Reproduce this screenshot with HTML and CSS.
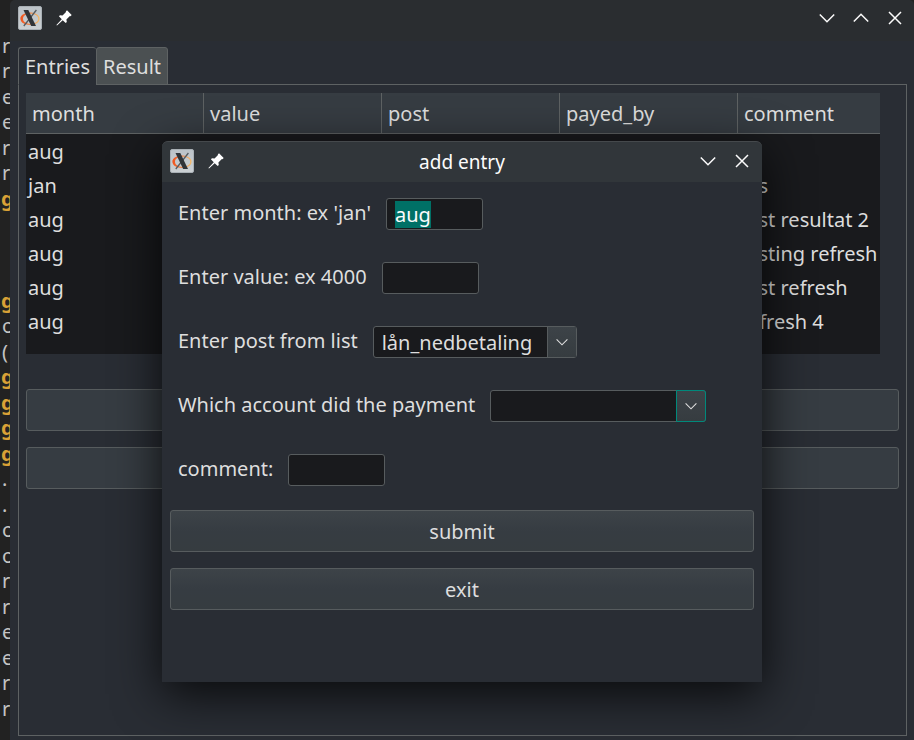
FILE: index.html
```
<!DOCTYPE html>
<html lang="en">
<head>
<meta charset="utf-8">
<title>Entries</title>
<link rel="stylesheet" href="styles.css">
</head>
<body>
<svg class="defs" aria-hidden="true">
  <defs>
    <linearGradient id="tile" x1="0" y1="0" x2="0" y2="1"><stop offset="0" stop-color="#bcc3c8"/><stop offset="1" stop-color="#cbd0d3"/></linearGradient>
    <linearGradient id="ring" x1="0" y1="0" x2="1" y2="0"><stop offset="0" stop-color="#f0521c"/><stop offset=".5" stop-color="#ee8347"/><stop offset="1" stop-color="#f3bd6c"/></linearGradient>
    <symbol id="xorg" viewBox="0 0 24 24">
      <rect x=".5" y=".5" width="23" height="23" rx="1.5" fill="url(#tile)" stroke="#a9b0b5"/>
      <path fill="url(#ring)" fill-rule="evenodd" d="M12 6.6C17 6.6 21.6 9 21.6 12.8S17 19 12 19 2.4 16.6 2.4 12.8 7 6.6 12 6.6zM12.6 7.8C8.6 7.8 5 9.6 5 12.8S8.6 17.8 12.6 17.8 20.2 16 20.2 12.8 16.6 7.8 12.6 7.8z"/>
      <path d="M18.4 4 5.8 20" stroke="#555b5f" stroke-width="1.3"/>
      <path d="M5.5 4h4.8l7.7 16h-4.8z" fill="#303438"/>
    </symbol>
    <symbol id="pin" viewBox="0 0 16 16">
      <path fill="#fff" d="M11 .3 15.7 5 14.5 6.2 13.9 6 10.4 9.5 10.8 12 9.7 13.1 6.7 10.2 1 15.6.4 15 5.8 9.3 2.9 6.3 4 5.2 6.5 5.6 10 2.1 9.8 1.5z"/>
    </symbol>
    <symbol id="down" viewBox="0 0 16 16"><path d="M.8 4.5 8 11.7 15.2 4.5" fill="none" stroke="currentColor" stroke-width="1.5"/></symbol>
    <symbol id="up" viewBox="0 0 16 16"><path d="M.8 11.5 8 4.3 15.2 11.5" fill="none" stroke="currentColor" stroke-width="1.5"/></symbol>
    <symbol id="close" viewBox="0 0 16 16"><path d="M2 2 14 14M14 2 2 14" fill="none" stroke="currentColor" stroke-width="1.5"/></symbol>
  </defs>
</svg>
<div class="desktop">
  <aside class="terminal">
    <span>r</span><span>r</span><span>e</span><span>e</span><span>r</span><span>r</span><b>g</b>
    <span></span><span></span><span></span><b>g</b><span>o</span><span>(</span><b>g</b><b>g</b><b>g</b><b>g</b>
    <span>.</span><span>.</span><span>o</span><span>o</span><span>r</span><span>r</span><span>e</span><span>e</span><span>r</span><span>r</span>
  </aside>

  <main class="window">
    <header class="titlebar">
      <svg class="app-icon"><use href="#xorg"/></svg>
      <button class="win-btn" aria-label="Pin"><svg><use href="#pin"/></svg></button>
      <span class="spacer"></span>
      <button class="win-btn" aria-label="Minimize"><svg><use href="#down"/></svg></button>
      <button class="win-btn" aria-label="Maximize"><svg><use href="#up"/></svg></button>
      <button class="win-btn" aria-label="Close"><svg><use href="#close"/></svg></button>
    </header>
    <div class="tabs" role="tablist">
      <button class="tab selected" role="tab" aria-selected="true">Entries</button>
      <button class="tab" role="tab" aria-selected="false">Result</button>
    </div>
    <section class="panel">
      <div class="table-box">
        <table>
          <thead><tr><th>month</th><th>value</th><th>post</th><th>payed_by</th><th>comment</th></tr></thead>
          <tbody>
            <tr><td>aug</td><td></td><td></td><td></td><td></td></tr>
            <tr><td>jan</td><td></td><td></td><td></td><td>tes</td></tr>
            <tr><td>aug</td><td></td><td></td><td></td><td>test resultat 2</td></tr>
            <tr><td>aug</td><td></td><td></td><td></td><td>testing refresh</td></tr>
            <tr><td>aug</td><td></td><td></td><td></td><td>test refresh</td></tr>
            <tr><td>aug</td><td></td><td></td><td></td><td>refresh 4</td></tr>
          </tbody>
        </table>
      </div>
      <button class="push" aria-label="Add entry"></button>
      <button class="push" aria-label="Refresh"></button>
    </section>

    <section class="dialog" role="dialog" aria-labelledby="dialog-title">
      <header class="titlebar">
        <svg class="app-icon"><use href="#xorg"/></svg>
        <button class="win-btn" aria-label="Pin"><svg><use href="#pin"/></svg></button>
        <h1 id="dialog-title">add entry</h1>
        <button class="win-btn" aria-label="Minimize"><svg><use href="#down"/></svg></button>
        <button class="win-btn" aria-label="Close"><svg><use href="#close"/></svg></button>
      </header>
      <form class="form">
        <div class="field"><label for="month">Enter month: ex 'jan'</label><input id="month" class="entry" value="aug"></div>
        <div class="field"><label for="value">Enter value: ex 4000</label><input id="value" class="entry"></div>
        <div class="field"><label for="post">Enter post from list</label>
          <span class="combo"><select id="post"><option>lån_nedbetaling</option></select><span class="arrow"><svg><use href="#down"/></svg></span></span></div>
        <div class="field"><label for="account">Which account did the payment</label>
          <span class="combo wide active"><select id="account"><option></option></select><span class="arrow"><svg><use href="#down"/></svg></span></span></div>
        <div class="field"><label for="comment">comment:</label><input id="comment" class="entry"></div>
        <button type="button" class="push">submit</button>
        <button type="button" class="push">exit</button>
      </form>
    </section>
  </main>
</div>
<script src="script.js"></script>
</body>
</html>
```
FILE: script.js
```
const month = document.getElementById('month');
month.focus();
month.select();
```
FILE: styles.css
```
* { box-sizing: border-box; }

body {
  margin: 0;
  background: #222;
  color: #dedede;
  font: 20px/26px "Noto Sans", sans-serif;
}

button, input, select { font: inherit; color: inherit; }

.defs { position: absolute; width: 0; height: 0; }

.desktop {
  display: flex;
  height: 100vh;
  overflow: hidden;
}

.terminal {
  flex: 0 0 10px;
  display: grid;
  grid-template-rows: repeat(14, 25px 26px);
  justify-items: end;
  padding-top: 33px;
  overflow: hidden;
  background: #222;
  color: #c4c4c4;
}
.terminal > * { width: 8px; }
.terminal b { width: 9px; color: #d9a136; }

.window {
  position: relative;
  flex: 1;
  display: flex;
  flex-direction: column;
  min-width: 0;
  padding: 0 7px 4px 8px;
  border-radius: 5px 5px 0 0;
  background: linear-gradient(#2a2d30 41px, #292d34 41px);
}

.titlebar {
  display: flex;
  align-items: center;
  gap: 10px;
  height: 36px;
}
.app-icon { width: 24px; height: 24px; }
.win-btn {
  display: flex;
  align-items: center;
  justify-content: center;
  width: 24px;
  height: 24px;
  padding: 0;
  border: 0;
  background: none;
  color: #fcfcfc;
}
.win-btn svg { width: 16px; height: 16px; }
.spacer { flex: 1; }

.tabs {
  display: flex;
  margin-top: 11px;
}
.tab {
  height: 38px;
  padding: 2px 6px 0;
  border: 1px solid #5e6263;
  border-radius: 3px 3px 0 0;
  background: #4b5052;
}
.tab.selected {
  background: #292d34;
  border-bottom-color: #292d34;
  border-right: 0;
  z-index: 1;
}

.panel {
  flex: 1;
  display: flex;
  flex-direction: column;
  margin-top: -1px;
  padding: 8px 7px;
  border: 1px solid #5e6263;
}
.panel .push + .push { margin-top: 16px; }

.table-box {
  height: 261px;
  margin: 0 19px 35px 0;
  background: #191a1d;
}
table {
  width: 100%;
  border-collapse: separate;
  border-spacing: 0;
  table-layout: fixed;
}
th {
  height: 41px;
  width: 178px;
  padding: 2px 6px 0;
  border-right: 1px solid #5e6263;
  border-bottom: 1px solid #5e6263;
  background: #363c42;
  font-weight: 400;
  text-align: left;
}
th:last-child { width: auto; border-right: 0; }
td {
  height: 34px;
  padding: 2px 2px 0;
  white-space: nowrap;
}

.push {
  height: 42px;
  padding: 2px 0 0;
  border: 1px solid #575c5e;
  border-radius: 3px;
  background: linear-gradient(#3d4348, #363c42 50%, #363c40);
}
.panel .push { background: #363c42; }

.dialog {
  position: absolute;
  top: 141px;
  left: 50%;
  width: 600px;
  height: 541px;
  transform: translateX(-50%);
  border-radius: 6px 6px 0 0;
  background: #292d34;
  box-shadow: 0 12px 48px rgba(0, 0, 0, .8);
}
.dialog .titlebar {
  height: 41px;
  padding: 0 8px 2px;
  border-top: 1px solid #45494c;
  border-radius: 6px 6px 0 0;
  background: #31363a;
}
.dialog h1 {
  flex: 1;
  margin: 0;
  padding-top: 2px;
  font-size: 19px;
  font-weight: 400;
  color: #fcfcfc;
  text-align: center;
}

.form {
  display: flex;
  flex-direction: column;
  gap: 16px;
  padding: 8px;
}
.field {
  display: flex;
  align-items: center;
  gap: 15px;
  height: 48px;
  padding: 0 8px;
}
.field label { padding-bottom: 2px; }

.entry {
  width: 97px;
  height: 32px;
  padding: 0 8px;
  border: 1px solid #575c5e;
  border-radius: 3px;
  background: #191a1d;
  outline: 0;
}
.entry::selection { background: #007066; color: #fcfcfc; }

.combo {
  display: flex;
  width: 204px;
  height: 32px;
  border: 1px solid #575c5e;
  border-radius: 3px;
  background: #191a1d;
}
.combo.wide { width: 216px; }
.combo select {
  flex: 1;
  min-width: 0;
  padding: 2px 8px 0;
  border: 0;
  appearance: none;
  background: none;
  outline: 0;
}
.arrow {
  display: flex;
  align-items: center;
  justify-content: center;
  width: 29px;
  border-left: 1px solid #575c5e;
  background: linear-gradient(#3d4348, #363c40);
}
.arrow svg { width: 12px; height: 12px; }
.active .arrow {
  width: 30px;
  margin: -1px;
  border: 1px solid #00897b;
  border-radius: 0 3px 3px 0;
}
```
